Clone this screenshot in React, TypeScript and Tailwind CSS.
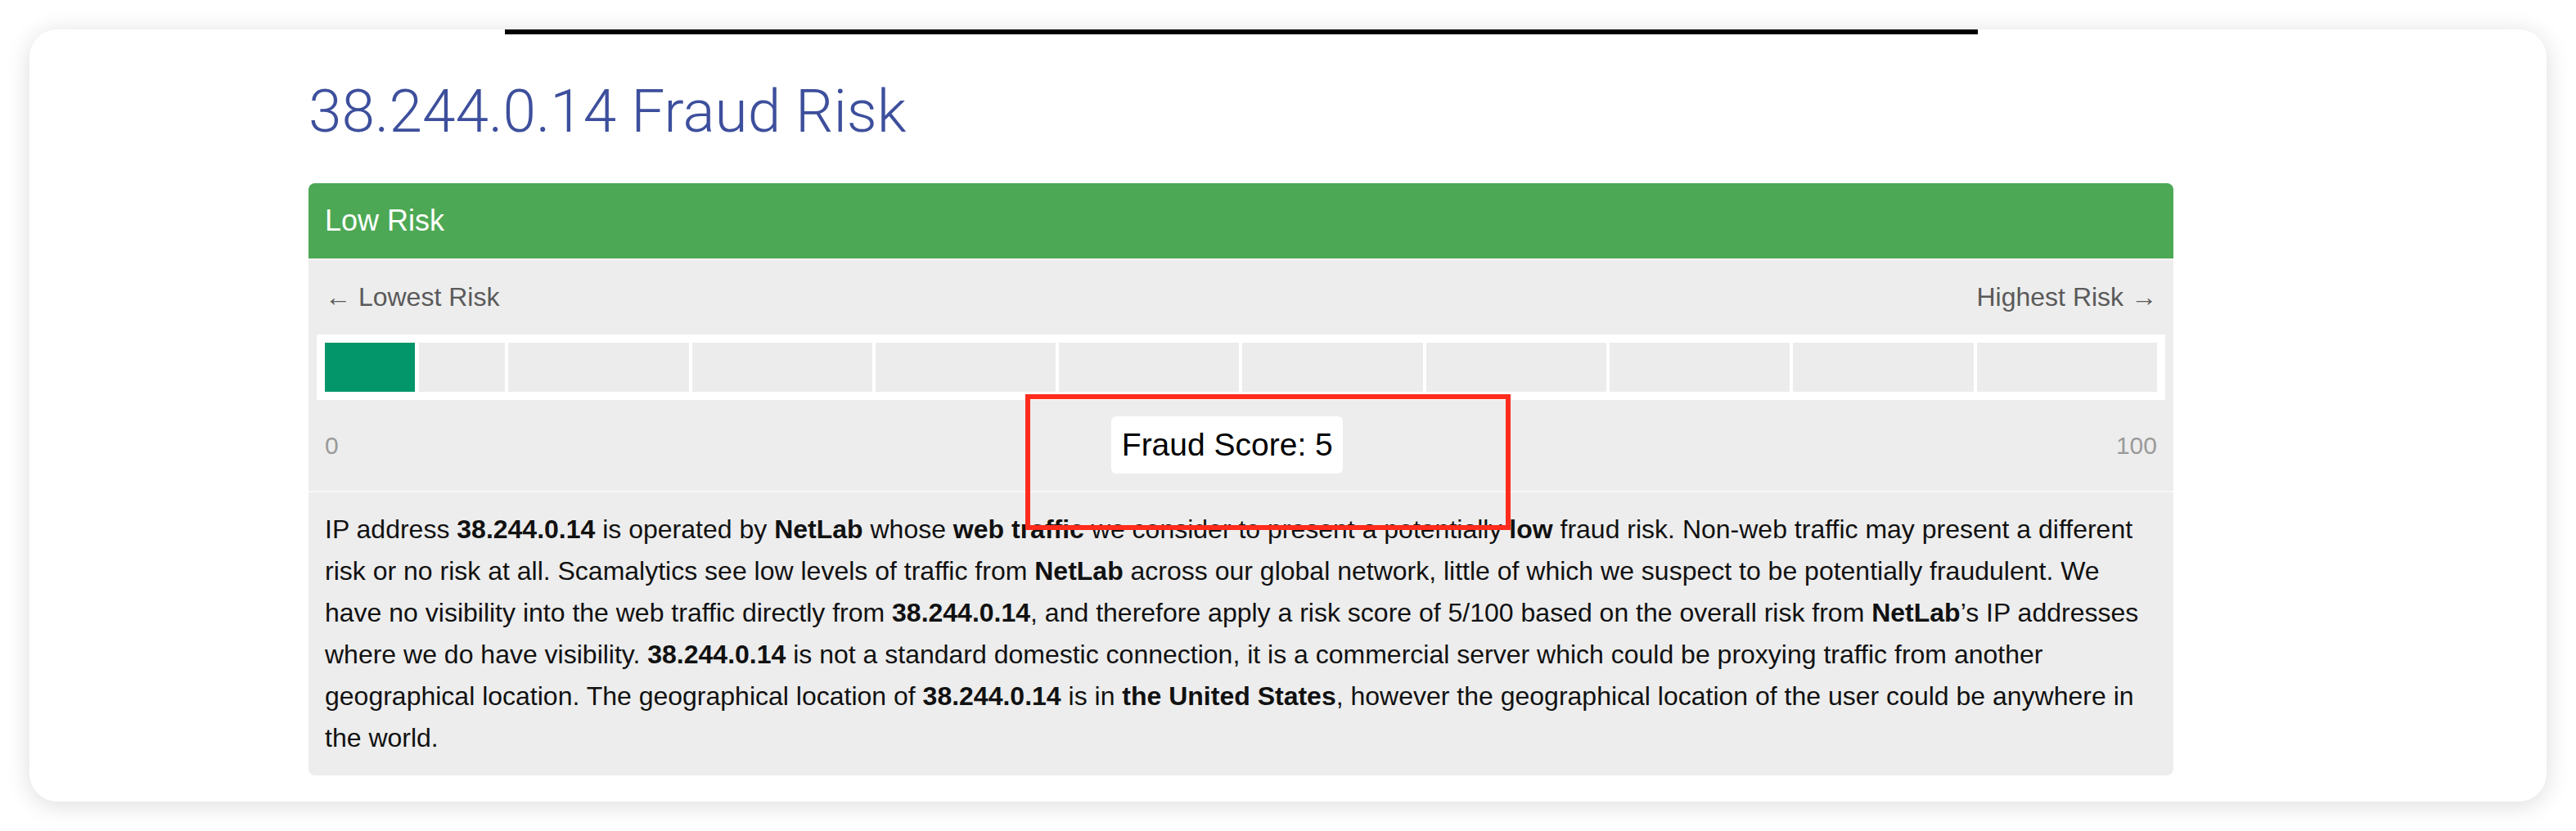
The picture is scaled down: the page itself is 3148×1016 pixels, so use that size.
import React from "react";

const ip = "38.244.0.14";
const score = 5;

const B = ({ children }: { children: React.ReactNode }) => <b className="font-bold">{children}</b>;

const Gauge = ({ value }: { value: number }) => {
   // ten buckets of 10 points each, first ones filled by the score
   const cells = Array.from({ length: 10 }, (_, i) => Math.max(0, Math.min(100, (value - i * 10) * 10)));
   return (
      <div className="mx-[10px] mt-[27px] h-[80px] bg-white p-[10px] flex gap-[4px]">
         {cells.map((fill, i) => (
            <div key={i} className="flex-1 flex gap-[5px]">
               {fill > 0 && <div className="h-full bg-[#03966a]" style={{ width: `${fill}%` }} />}
               <div className="h-full flex-1 bg-[#ebeceb]" />
            </div>
         ))}
      </div>
   );
};

const App = () => {
   return (
      <div className="w-[3148px] h-[1016px] bg-white pt-[36px] pl-[36px] font-['Liberation_Sans',Arial,sans-serif]">
         <div className="w-[3076px] h-[944px] rounded-[34px] bg-white shadow-[0_4px_30px_rgba(0,0,0,0.14)] pl-[341px]">
            <div className="w-[2279px]">
               <div className="mx-auto w-[1800px] h-[6px] bg-black" />
               <h1 className="mt-[58px] text-[73px] leading-[73px] font-light text-[#3d4f9c] font-['Roboto','Liberation_Sans',sans-serif]">
                  {ip} Fraud Risk
               </h1>

               <div className="relative mt-[51px] rounded-[8px] overflow-hidden bg-[#ededed]">
                  <div className="h-[92px] bg-[#4ca854] px-[20px] flex items-center">
                     <span className="text-[36px] leading-none text-white">Low Risk</span>
                  </div>
                  <div className="border-t-2 border-[#f5f5f5]">
                     <div className="pt-[27px] px-[20px] flex justify-between text-[32px] leading-[37px] text-[#5a5a5a]">
                        <span>← Lowest Risk</span>
                        <span>Highest Risk →</span>
                     </div>
                     <Gauge value={score} />
                     <div className="px-[20px] pt-[20px] pb-[21px] flex items-center justify-between text-[30px] text-[#9a9a9a]">
                        <span>0</span>
                        <div className="w-[283px] h-[70px] rounded-[6px] bg-white flex items-center justify-center text-[39px] text-black">
                           Fraud Score: {score}
                        </div>
                        <span>100</span>
                     </div>
                  </div>
                  <p className="border-t-2 border-[#f7f7f7] p-[20px] text-[32px] leading-[51px] text-[#111]">
                     IP address <B>{ip}</B> is operated by <B>NetLab</B> whose <B>web traffic</B> we consider to present a
                     potentially <B>low</B> fraud risk. Non-web traffic may present a different risk or no risk at all.
                     Scamalytics see low levels of traffic from <B>NetLab</B> across our global network, little of which we
                     suspect to be potentially fraudulent. We have no visibility into the web traffic directly from{" "}
                     <B>{ip}</B>, and therefore apply a risk score of 5/100 based on the overall risk from <B>NetLab</B>’s IP
                     addresses where we do have visibility. <B>{ip}</B> is not a standard domestic connection, it is a
                     commercial server which could be proxying traffic from another geographical location. The geographical
                     location of <B>{ip}</B> is in <B>the United States</B>, however the geographical location of the user
                     could be anywhere in the world.
                  </p>

                  {/* highlight box around the score */}
                  <div className="absolute left-[876px] top-[258px] w-[593px] h-[166px] border-[6px] border-[#ff2b1c]" />
               </div>
            </div>
         </div>
      </div>
   );
};

export default App;
